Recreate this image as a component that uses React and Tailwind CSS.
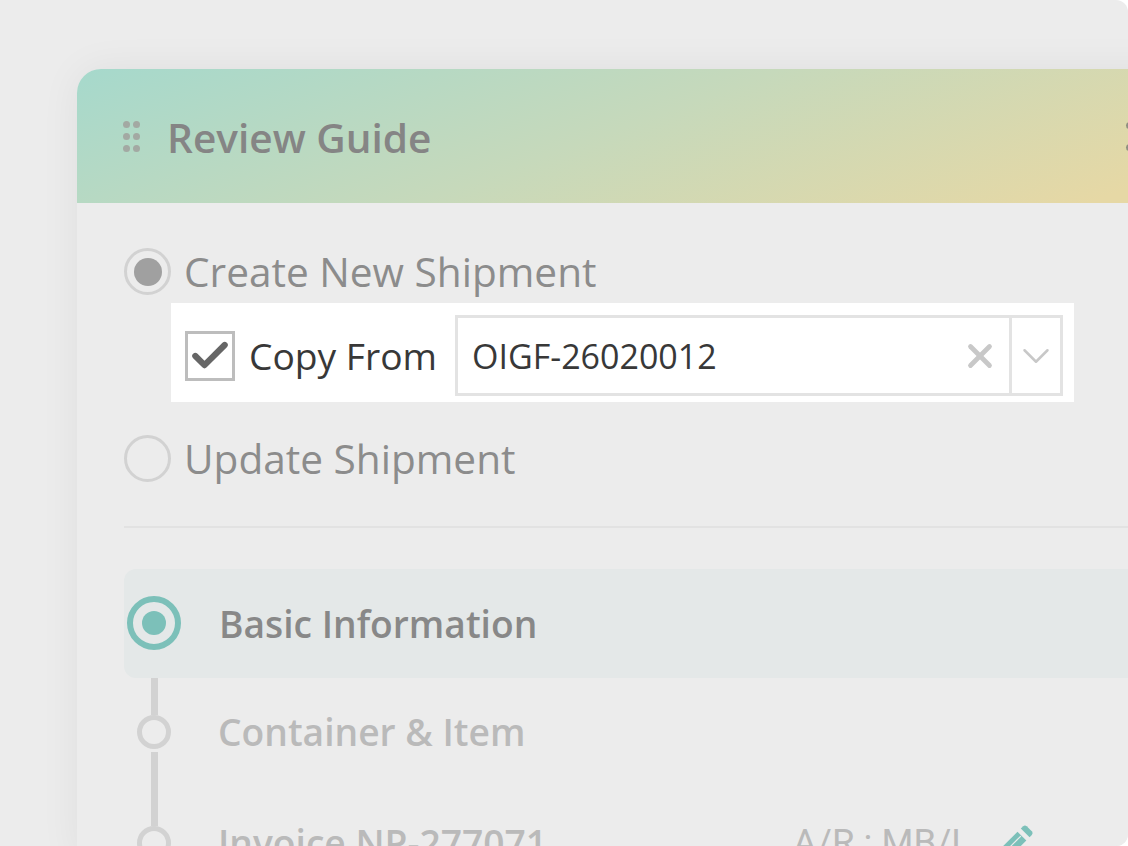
import { X, ChevronDown, Check } from "lucide-react";

function Radio({ checked }) {
  return (
    <span className="flex h-[47px] w-[47px] shrink-0 items-center justify-center rounded-full border-[3px] border-[#d2d2d2]">
      {checked && <span className="h-[28px] w-[28px] rounded-full bg-[#a0a0a0]" />}
    </span>
  );
}

function GripDots() {
  return (
    <div className="grid w-[17px] grid-cols-2 gap-x-[3px] gap-y-[5px]">
      {[0, 1, 2, 3, 4, 5].map((i) => (
        <span key={i} className="h-[7px] w-[7px] rounded-full bg-[#a3a9a3]" />
      ))}
    </div>
  );
}

function Connector({ className }) {
  return <div className={`ml-[27px] w-[7px] bg-[#d2d2d2] ${className}`} />;
}

function StepDot() {
  return (
    <span className="ml-[13px] h-[34px] w-[34px] shrink-0 rounded-full border-[5px] border-[#d2d2d2]" />
  );
}

export default function App() {
  return (
    <div className="h-[846px] w-full overflow-hidden rounded-r-[12px] bg-[#ececec] pl-[77px] pt-[69px] font-['Open_Sans',sans-serif]">
      <div className="w-[1200px] rounded-t-[24px] bg-[#ececec] shadow-[0_0_40px_rgba(0,0,0,0.06)]">
        <div className="flex h-[134px] items-center gap-[27px] rounded-t-[24px] bg-[linear-gradient(160deg,#a6d9cc_0%,#c6d9bb_45%,#e6d8a5_88%)] pl-[46px]">
          <GripDots />
          <h1 className="translate-y-[2px] text-[40.6px] font-semibold leading-none text-[#858585]">Review Guide</h1>
          {/* header action, only its left edge is inside the crop */}
          <div className="ml-[668px] flex flex-col gap-[15px]">
            <span className="h-[7px] w-[7px] rounded-full bg-[#8f8f80]" />
            <span className="h-[7px] w-[7px] rounded-full bg-[#8f8f80]" />
          </div>
        </div>

        <div className="pl-[47px] pt-[45px]">
          <div className="flex items-center gap-[13px]">
            <Radio checked />
            <span className="text-[40.6px] leading-[47px] text-[#8c8c8c]">Create New Shipment</span>
          </div>

          <div className="ml-[47px] mt-[8px] flex h-[99px] w-[903px] items-center bg-white pl-[14px] pt-[6px]">
            <span className="flex h-[50px] w-[50px] shrink-0 items-center justify-center border-[3px] border-[#bdbdbd]">
              <Check size={44} strokeWidth={3.4} className="text-[#666666]" />
            </span>
            <span className="ml-[14px] text-[37.2px] text-[#383838]">Copy From</span>
            <div className="ml-auto mr-[11px] flex h-[81px] w-[608px] items-center border-[3px] border-[#e3e3e3]">
              <span className="ml-[14px] flex-1 translate-y-[1px] text-[34px] text-[#383838]">OIGF-26020012</span>
              <X size={38} strokeWidth={3} className="mr-[10px] text-[#c8c8c8]" />
              <span className="flex h-full w-[51px] items-center justify-center border-l-[3px] border-[#e3e3e3]">
                <ChevronDown size={46} strokeWidth={1.3} className="text-[#c8c8c8]" />
              </span>
            </div>
          </div>

          <div className="mt-[33px] flex items-center gap-[13px]">
            <Radio />
            <span className="text-[40.6px] leading-[47px] text-[#8c8c8c]">Update Shipment</span>
          </div>

          <div className="mt-[44px] h-[2px] bg-[#e2e2e2]" />

          <div className="mt-[41px] flex h-[109px] items-center rounded-l-[12px] bg-[#e4e8e8]">
            <span className="ml-[3px] flex h-[54px] w-[54px] shrink-0 -translate-y-[1px] items-center justify-center rounded-full border-[6px] border-[#7cc0b9]">
              <span className="h-[24px] w-[24px] rounded-full bg-[#7cc0b9]" />
            </span>
            <span className="ml-[38px] text-[37.2px] font-semibold text-[#888888]">Basic Information</span>
          </div>

          <Connector className="h-[37px]" />
          <div className="flex h-[34px] items-center">
            <StepDot />
            <span className="ml-[47px] text-[37.2px] font-semibold text-[#bababa]">Container &amp; Item</span>
          </div>
          <Connector className="mt-[3px] h-[74px]" />
          <div className="flex h-[34px] items-center">
            <StepDot />
            <span className="ml-[47px] text-[37.2px] font-semibold text-[#bababa]">Invoice NP-277071</span>
            <span className="ml-[246px] font-['Roboto',sans-serif] text-[36.6px] text-[#bababa]">A/R : MB/L</span>
            <svg viewBox="0 0 40 40" className="ml-[19px] h-[44px] w-[44px] translate-y-[3px]">
              <path d="M28 4l2.2-2a2.4 2.4 0 0 1 3.2.1l4.6 4.6a2.4 2.4 0 0 1 0 3.3L36 12z" fill="#7cc0b9" />
              <path d="M25 7l8 8-19 19-9 2 1-10z" fill="#7cc0b9" />
              <path d="M10 29L28 11" stroke="#ececec" strokeWidth="1" />
            </svg>
          </div>
        </div>
      </div>
    </div>
  );
}
